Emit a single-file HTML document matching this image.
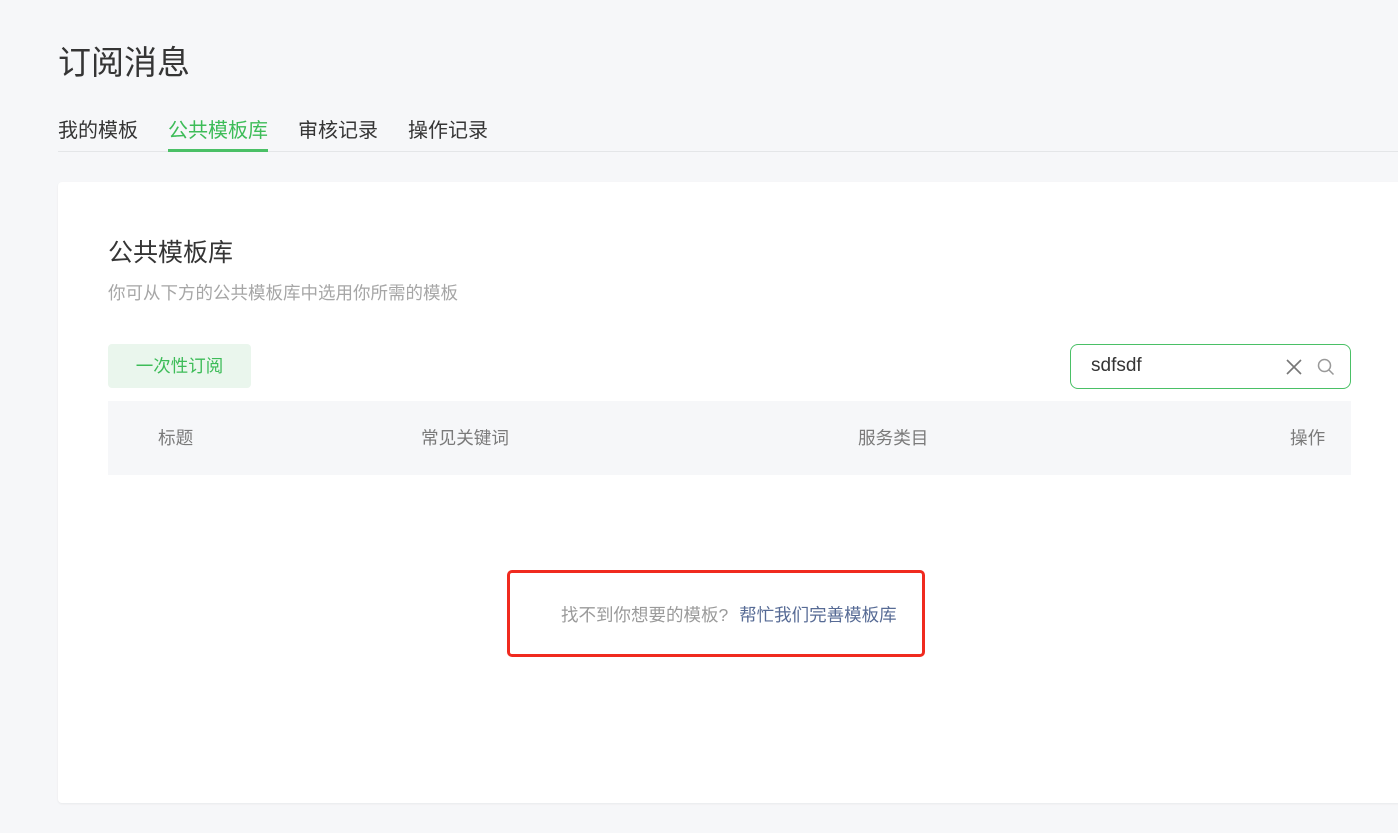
<!DOCTYPE html>
<html><head><meta charset="utf-8"><style>
*{margin:0;padding:0;box-sizing:border-box}
body{width:1398px;height:833px;background:#f6f7f9;font-family:"Liberation Sans","Noto Sans CJK SC",sans-serif;position:relative;overflow:hidden;color:#353535}
.abs{position:absolute;white-space:nowrap}
</style></head><body>
<div class="abs" style="left:58px;top:41px;font-size:33px;line-height:44px;color:#353535">订阅消息</div>
<div class="abs" style="left:58px;top:151px;width:1340px;height:1px;background:#e4e6e8"></div>
<div class="abs" style="left:58px;top:117px;font-size:20px;line-height:28px;color:#353535">我的模板</div>
<div class="abs" style="left:168px;top:117px;font-size:20px;line-height:28px;color:#3dbc58">公共模板库</div>
<div class="abs" style="left:168px;top:149px;width:100px;height:3px;background:#4ac066"></div>
<div class="abs" style="left:298px;top:117px;font-size:20px;line-height:28px;color:#353535">审核记录</div>
<div class="abs" style="left:408px;top:117px;font-size:20px;line-height:28px;color:#353535">操作记录</div>
<div class="abs" style="left:58px;top:182px;width:1360px;height:621px;background:#fff;border-radius:4px;box-shadow:0 1px 2px rgba(0,0,0,.06)"></div>
<div class="abs" style="left:108px;top:237px;font-size:25px;line-height:32px;color:#353535">公共模板库</div>
<div class="abs" style="left:108px;top:281px;font-size:17.5px;line-height:24px;color:#a6a6a6">你可从下方的公共模板库中选用你所需的模板</div>
<div class="abs" style="left:108px;top:344px;width:143px;height:44px;background:#eaf6ed;border-radius:4px;color:#3dbc58;font-size:17.5px;line-height:44px;text-align:center">一次性订阅</div>
<div class="abs" style="left:1070px;top:344px;width:281px;height:45px;border:1px solid #4ac066;border-radius:8px;background:#fff">
<div class="abs" style="left:20px;top:9px;font-size:19px;line-height:24px;color:#353535">sdfsdf</div>
<svg class="abs" style="left:214px;top:13px" width="18" height="18" viewBox="0 0 18 18"><path d="M2 2L16 16M16 2L2 16" stroke="#777" stroke-width="1.6" fill="none"/></svg>
<svg class="abs" style="left:246px;top:13px" width="18" height="18" viewBox="0 0 18 18"><circle cx="7.5" cy="7.5" r="6" stroke="#999" stroke-width="1.5" fill="none"/><path d="M12 12L16.5 16.5" stroke="#999" stroke-width="1.5"/></svg>
</div>
<div class="abs" style="left:108px;top:401px;width:1243px;height:74px;background:#f6f7f9"></div>
<div class="abs" style="left:158px;top:426px;font-size:17.6px;line-height:24px;color:#7a7a7a">标题</div>
<div class="abs" style="left:421px;top:426px;font-size:17.6px;line-height:24px;color:#7a7a7a">常见关键词</div>
<div class="abs" style="left:858px;top:426px;font-size:17.6px;line-height:24px;color:#7a7a7a">服务类目</div>
<div class="abs" style="left:1290px;top:426px;font-size:17.6px;line-height:24px;color:#7a7a7a">操作</div>
<div class="abs" style="left:507px;top:570px;width:418px;height:87px;border:3px solid #f02a1f;border-radius:5px"></div>
<div class="abs" style="left:561px;top:603px;font-size:17.5px;line-height:24px;color:#9a9a9a">找不到你想要的模板? <span style="color:#576b95;margin-left:6px">帮忙我们完善模板库</span></div>
</body></html>
